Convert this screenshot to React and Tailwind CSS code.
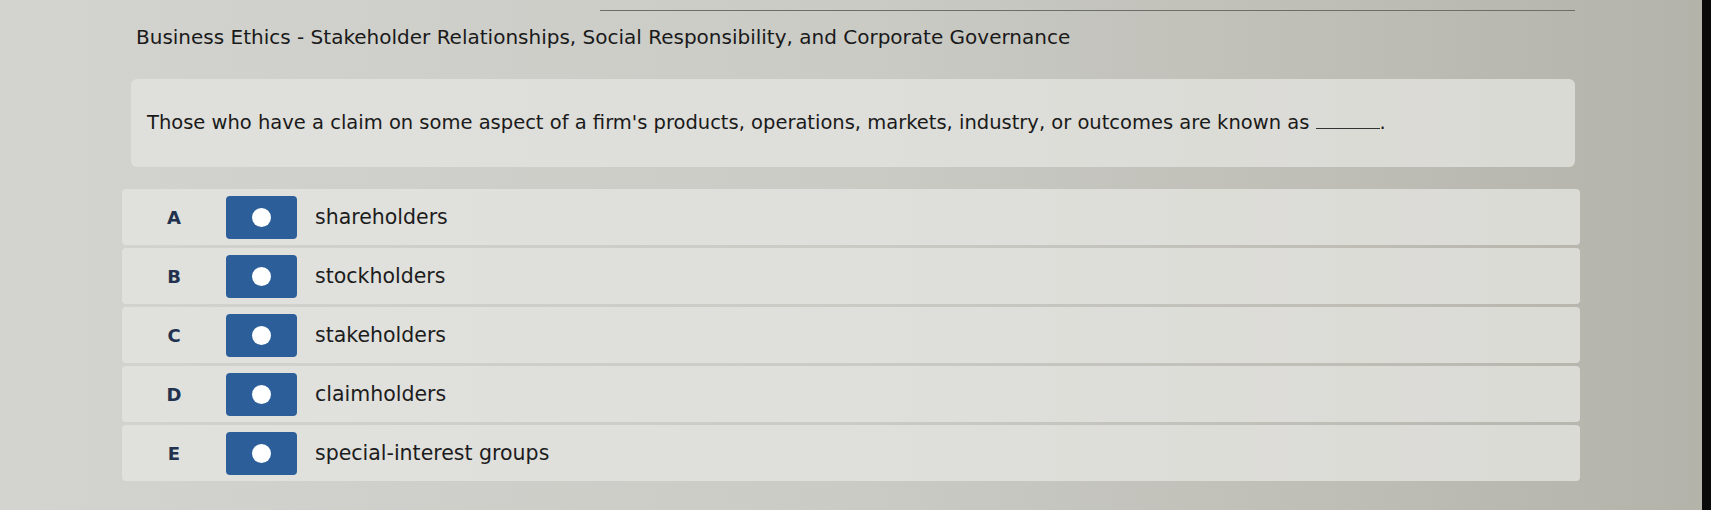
import React from 'react';

const options = [
  { letter: 'A', text: 'shareholders' },
  { letter: 'B', text: 'stockholders' },
  { letter: 'C', text: 'stakeholders' },
  { letter: 'D', text: 'claimholders' },
  { letter: 'E', text: 'special-interest groups' },
];

export default function App() {
  return (
    <div className="flex h-[510px] w-[1711px] overflow-hidden bg-gradient-to-r from-[#d3d3cf] via-[#cbcbc6] to-[#b4b3aa] font-['DejaVu_Sans',sans-serif] text-[#1c1c1c]">
      <div className="flex flex-1 flex-col">
        {/* header rule */}
        <div className="ml-[600px] mt-[10px] h-px w-[975px] bg-[#6e6e69]" />

        <h1 className="ml-[136px] mt-[12px] text-[20px] leading-7 text-[#1a1a1a]">
          Business Ethics - Stakeholder Relationships, Social Responsibility, and Corporate Governance
        </h1>

        <div className="ml-[131px] mt-[28px] flex h-[88px] w-[1444px] items-center rounded-md bg-[#e2e2de]/80 px-4">
          <p className="text-[19.5px] text-[#1a1a1a]">
            Those who have a claim on some aspect of a firm's products, operations, markets, industry, or outcomes are known as{' '}
            <span className="inline-block w-[64px] border-b border-[#333]" />.
          </p>
        </div>

        <div className="ml-[122px] mt-[22px] flex w-[1458px] flex-col gap-[3px]">
          {options.map((o) => (
            <div key={o.letter} className="flex h-[56px] items-center rounded-sm bg-[#e4e4e0]/80">
              <span className="w-[104px] text-center text-[18px] font-bold text-[#22324e]">{o.letter}</span>
              <button className="flex h-[43px] w-[71px] items-center justify-center rounded-[4px] bg-[#2c5f9a]">
                <span className="h-[19px] w-[19px] rounded-full bg-white" />
              </button>
              <span className="ml-[18px] text-[20.5px] text-[#1c1c1c]">{o.text}</span>
            </div>
          ))}
        </div>
      </div>
      <div className="w-[9px] bg-[#0a0a0a]" />
    </div>
  );
}
